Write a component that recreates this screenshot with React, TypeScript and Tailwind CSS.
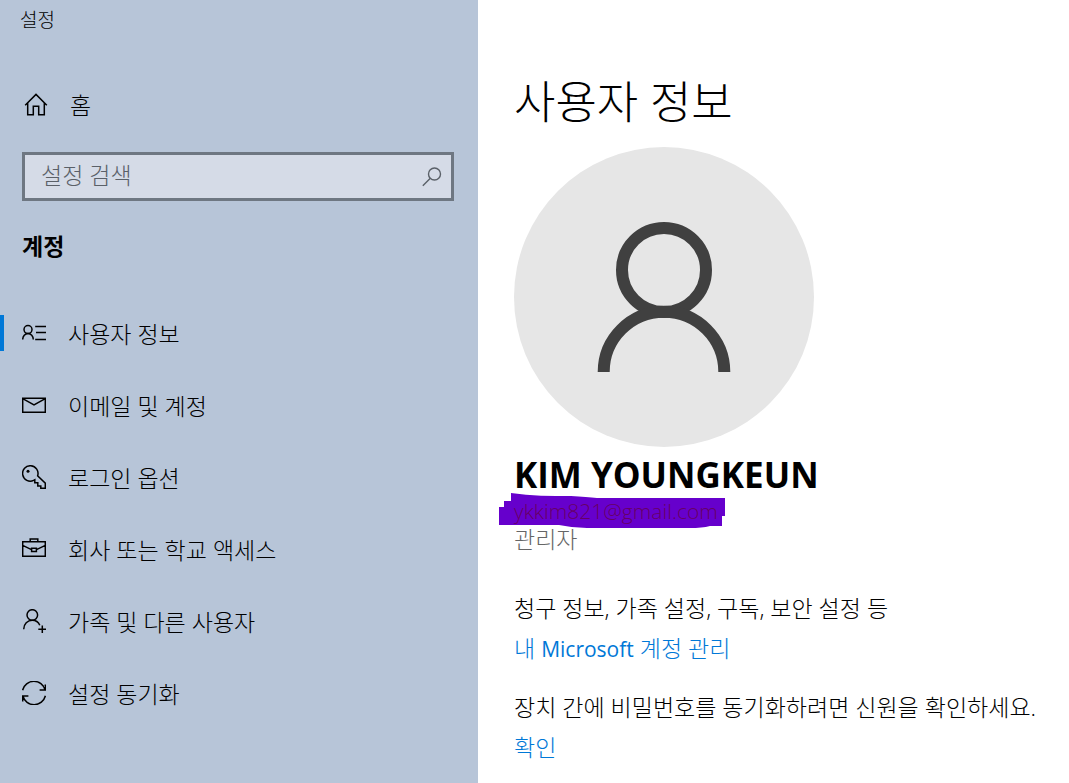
import type { ReactNode } from "react";

function Icon({ children }: { children: ReactNode }) {
  return (
    <svg
      viewBox="0 0 24 24"
      className="size-6 shrink-0"
      fill="none"
      stroke="currentColor"
      strokeWidth="1.5"
      aria-hidden="true"
    >
      {children}
    </svg>
  );
}

const items: { label: string; icon: ReactNode }[] = [
  {
    label: "사용자 정보",
    icon: (
      <>
        <circle cx="6" cy="8.6" r="4" />
        <path d="M.7 18.6a5.3 6 0 0 1 10.600 0M13.200 5.500H24M14 11.500h10M13.200 18.500H24" />
      </>
    ),
  },
  {
    label: "이메일 및 계정",
    icon: <path d="M.7 5.2h22.6v14H.7zM.7 5.7 12 11.8l11.3-6.1" />,
  },
  {
    label: "로그인 옵션",
    icon: (
      <>
        <path d="M15.6 10.9A7.7 7.7 0 1 0 11.6 15.4l1.2-.6v3h3v3.3h3v2.2h4.5v-5.2l-7.7-7.2z" />
        <circle cx="6" cy="6.2" r="1.5" fill="currentColor" stroke="none" />
      </>
    ),
  },
  {
    label: "회사 또는 학교 액세스",
    icon: (
      <path d="M.7 4.8h22.6v14.5H.7zM8.2 4.8V1.9h7.6v2.9M.7 8.4l8.8 4.2M23.3 8.4l-8.8 4.2M9.6 11.2h4.8v3.2H9.6z" />
    ),
  },
  {
    label: "가족 및 다른 사용자",
    icon: (
      <>
        <circle cx="10.3" cy="6" r="5.3" />
        <path d="M1.7 20.2a8.6 9 0 0 1 8.6-9c3.4 0 6.2 2 7.5 5M20.3 16.5v8M16.3 20.3h8" />
      </>
    ),
  },
  {
    label: "설정 동기화",
    icon: (
      <path d="M.6 9.2a11.6 11.6 0 0 1 22.5-.2M23.3 3.5V9h-5.7M23.4 14.8a11.6 11.6 0 0 1-22.5.2M.7 20.6V15h5.7" />
    ),
  },
];

function Sidebar() {
  return (
    <aside className="w-[478px] shrink-0 bg-[#b7c5d8]">
      <div className="px-5 pt-1 text-[19px] leading-8">설정</div>
      <a href="#home" className="mt-11 flex h-[50px] items-center gap-[22px] pl-6">
        <Icon>
          <path d="M1.2 12.2 12 1.4l10.8 10.8M3.7 10v11.8h5.6v-8.600h5.400v8.600h5.600V10" />
        </Icon>
        <span className="text-[23px] leading-8">홈</span>
      </a>
      <label className="mt-[22px] mr-6 ml-[22px] flex h-[49px] items-center border-3 border-[#6e7782] bg-[#d5dbe7] pr-[7px] pl-4 text-[#5a6068]">
        <input
          type="text"
          aria-label="설정 검색"
          placeholder="설정 검색"
          className="h-8 min-w-0 flex-1 bg-transparent pb-1 text-[23px] leading-8 outline-none placeholder:text-[#5a6068]"
        />
        <svg
          viewBox="0 0 24 24"
          className="size-6"
          fill="none"
          stroke="currentColor"
          strokeWidth="1.4"
          aria-hidden="true"
        >
          <circle cx="14.5" cy="9" r="6" />
          <path d="M10.3 13.3 2.8 20.8" />
        </svg>
      </label>
      <h2 className="mt-[29px] pl-[22px] text-[23px] leading-8 font-bold">계정</h2>
      <nav className="mt-[35px]">
        {items.map((item, i) => (
          <a
            key={item.label}
            href="#section"
            className="relative flex h-[72px] items-center gap-[22px] pl-[22px]"
          >
            {i === 0 && (
              <span className="absolute top-[18px] left-0 h-9 w-1 bg-[#0078d7]" />
            )}
            <Icon>{item.icon}</Icon>
            <span className="pt-0.5 text-[23px] leading-8">{item.label}</span>
          </a>
        ))}
      </nav>
    </aside>
  );
}

export default function App() {
  return (
    <div className="flex min-h-screen bg-white font-['Open_Sans','Noto_Sans_CJK_KR',sans-serif] font-light text-black">
      <Sidebar />
      <main className="min-w-0 flex-1 pt-[68px] pl-9">
        <h1 className="text-[45px] leading-[68px]">사용자 정보</h1>
        <svg
          viewBox="0 0 300 300"
          className="mt-[11px] size-[300px]"
          fill="none"
          stroke="#404040"
          strokeWidth="12"
          role="img"
          aria-label="프로필 사진"
        >
          <circle cx="150" cy="150" r="150" fill="#e6e6e6" stroke="none" />
          <circle cx="150" cy="123" r="42" />
          <path d="M89.700 225a60.300 60.300 0 0 1 120.600 0" />
        </svg>
        <p className="mt-1 text-[35px] leading-12 font-bold">KIM YOUNGKEUN</p>
        <div className="relative">
          <svg
            viewBox="0 0 226 36"
            className="absolute -top-[6px] -left-[15px] h-9 w-[226px]"
            fill="#6600cc"
            aria-hidden="true"
          >
            <path d="M12 0c20 3 40 3 60 3q16 1 26 2h128v18h-3v10h-12q-8 2-20 2H88q-14 0-28-3H0V14h5V8h7z" />
          </svg>
          <p className="relative text-[21px] leading-6 text-[#660066]">
            ykkim821@gmail.com
          </p>
        </div>
        <p className="pt-px text-[23px] leading-[30px] text-[#666]">관리자</p>
        <p className="mt-[34px] text-[23px] leading-10">
          청구 정보, 가족 설정, 구독, 보안 설정 등
        </p>
        <a href="#manage" className="block text-[23px] leading-10 text-[#0078d7]">
          내 <span className="text-[21px] font-normal">Microsoft</span> 계정 관리
        </a>
        <p className="mt-[18px] text-[23px] leading-10">
          장치 간에 비밀번호를 동기화하려면 신원을 확인하세요.
        </p>
        <a href="#verify" className="block text-[23px] leading-10 text-[#0078d7]">
          확인
        </a>
      </main>
    </div>
  );
}
